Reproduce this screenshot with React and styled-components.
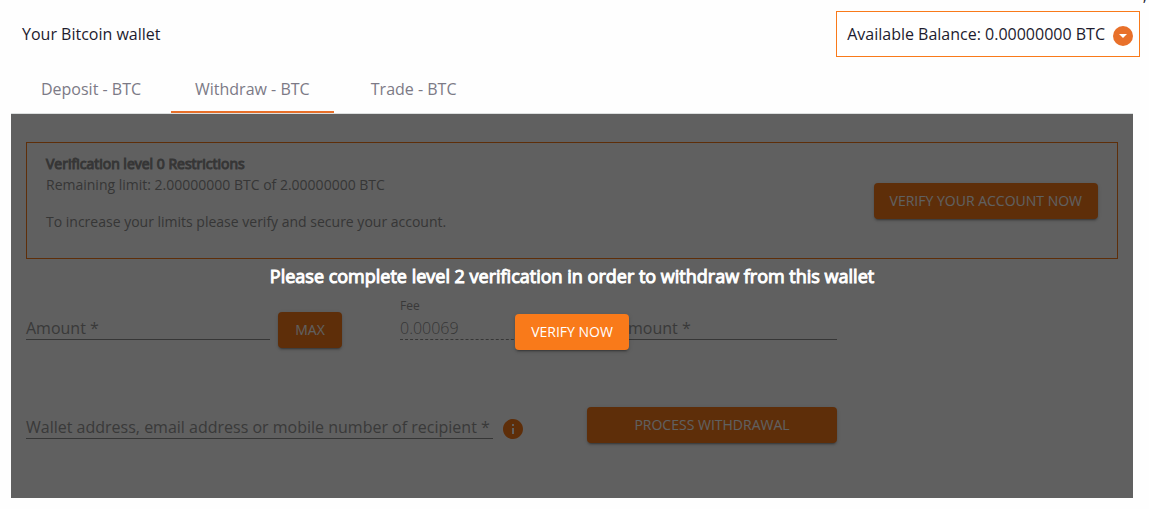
import React from "react";
import styled, { createGlobalStyle } from "styled-components";

const ORANGE = "#f97a1a";

const GlobalStyle = createGlobalStyle`
    * {
        box-sizing: border-box;
    }
    body {
        margin: 0;
        background: #fefefe;
        color: #1d1b2e;
        font-family: "Open Sans", "Noto Sans", sans-serif;
        font-size: 16px;
        line-height: 24px;
    }
    button, input {
        font-family: inherit;
    }
`;

const Page = styled.main`
    position: relative;
    padding: 11px 9px 11px 11px;
    overflow: hidden;
`;

// tail of the line that is scrolled out above the wallet
const ScrolledText = styled.span`
    position: absolute;
    top: -17px;
    right: 2px;
`;

const Header = styled.header`
    display: flex;
    align-items: center;
    justify-content: space-between;
    padding-left: 11px;
    margin-bottom: 8px;
`;

const Title = styled.h1`
    margin: 0;
    font-size: 16px;
    font-weight: 400;
`;

const Balance = styled.button`
    display: flex;
    align-items: center;
    gap: 8px;
    height: 46px;
    padding: 0 6px 0 10px;
    border: 1px solid ${ORANGE};
    background: #fff;
    color: inherit;
    font-size: 16px;

    svg {
        margin-top: 3px;
    }
`;

const Tabs = styled.div`
    display: flex;
    margin-right: 7px;
    border-bottom: 1px solid #dcdfdf;
`;

const Tab = styled.button`
    min-width: 160px;
    height: 48px;
    padding: 2px 24px 0;
    border: 0;
    border-bottom: 2px solid ${({ $active }) => ($active ? "#e8702a" : "transparent")};
    background: none;
    color: #7c7a86;
    font-size: 16px;
`;

const Panel = styled.section`
    position: relative;
    margin-right: 7px;
    padding: 28px 15px 55px;
    background: #fff;
`;

const Restrictions = styled.div`
    display: flex;
    align-items: center;
    justify-content: space-between;
    padding: 10px 19px;
    border: 1px solid ${ORANGE};
    color: #919191;
    font-size: 14px;
    line-height: 21px;

    p {
        margin: 0 0 16px;
    }
    strong {
        font-weight: 400;
        -webkit-text-stroke: 1px;
    }
`;

const Button = styled.button`
    min-width: 64px;
    height: 36px;
    padding: 0 16px;
    border: 0;
    border-radius: 4px;
    background: ${ORANGE};
    box-shadow: 0 3px 1px -2px rgba(0, 0, 0, 0.2), 0 2px 2px rgba(0, 0, 0, 0.14), 0 1px 5px rgba(0, 0, 0, 0.12);
    color: #fff;
    font-size: 14px;
    font-weight: 500;
    line-height: 36px;
    text-transform: uppercase;
`;

const Form = styled.form`
    display: grid;
    grid-template-columns: minmax(0, 1fr) 129px 250px;
    column-gap: 58px;
    row-gap: 47px;
    align-items: start;
    width: 75%;
    margin-top: 37px;
    padding-right: 8px;
`;

const AmountGroup = styled.div`
    display: flex;
    gap: 8px;

    ${Button} {
        margin-top: 16px;
    }
`;

const RecipientGroup = styled.div`
    grid-column: span 2;
    display: flex;
    align-items: flex-end;
    gap: 10px;
    padding-right: 6px;
`;

const SubmitButton = styled(Button)`
    margin-top: 12px;
`;

const FieldBox = styled.div`
    flex: 1;
    min-width: 0;
    display: grid;
    grid-template-rows: 16px 28px;
`;

const Label = styled.label`
    grid-area: ${({ $floating }) => ($floating ? "1 / 1" : "2 / 1")};
    padding-top: ${({ $floating }) => ($floating ? "2px" : "4px")};
    color: #999;
    font-size: ${({ $floating }) => ($floating ? "12px" : "16px")};
    font-weight: 400;
    line-height: ${({ $floating }) => ($floating ? "16px" : "24px")};
    white-space: nowrap;
    pointer-events: none;
`;

const Input = styled.input`
    grid-area: 2 / 1;
    width: 100%;
    padding: 4px 0 0;
    border: 0;
    border-bottom: 1px ${({ disabled }) => (disabled ? "dashed" : "solid")} #919191;
    background: none;
    color: #919191;
    font-size: 16px;
    font-weight: 300;
`;

const Overlay = styled.div`
    position: absolute;
    inset: 0;
    display: flex;
    flex-direction: column;
    align-items: center;
    justify-content: center;
    gap: 24px;
    background: rgba(0, 0, 0, 0.625);
    color: #fff;
`;

const Message = styled.p`
    margin: 0;
    font-size: 18px;
    line-height: 28px;
    -webkit-text-stroke: 1px;
`;

const Field = ({ id, label, value, disabled }) => (
    <FieldBox>
        <Label htmlFor={id} $floating={Boolean(value)}>
            {label}
        </Label>
        <Input id={id} defaultValue={value} disabled={disabled} />
    </FieldBox>
);

const CaretIcon = () => (
    <svg width="20" height="20" viewBox="0 0 20 20" aria-hidden="true">
        <circle cx="10" cy="10" r="10" fill="#e8702a" />
        <path d="M6 8h8l-4 4z" fill="#fff" />
    </svg>
);

const InfoIcon = () => (
    <svg width="20" height="20" viewBox="2 2 20 20" aria-hidden="true">
        <path
            fill={ORANGE}
            d="M12 2C6.48 2 2 6.48 2 12s4.48 10 10 10 10-4.48 10-10S17.52 2 12 2zm1 15h-2v-6h2v6zm0-8h-2V7h2v2z"
        />
    </svg>
);

const App = () => (
    <React.Fragment>
        <GlobalStyle />
        <Page>
            <ScrolledText>,</ScrolledText>
            <Header>
                <Title>Your Bitcoin wallet</Title>
                <Balance type="button">
                    Available Balance: 0.00000000 BTC
                    <CaretIcon />
                </Balance>
            </Header>
            <Tabs role="tablist">
                <Tab role="tab">Deposit - BTC</Tab>
                <Tab role="tab" aria-selected="true" $active>
                    Withdraw - BTC
                </Tab>
                <Tab role="tab">Trade - BTC</Tab>
            </Tabs>
            <Panel>
                <Restrictions>
                    <div>
                        <p>
                            <strong>Verification level 0 Restrictions</strong>
                            <br />
                            Remaining limit: 2.00000000 BTC of 2.00000000 BTC
                        </p>
                        <p>To increase your limits please verify and secure your account.</p>
                    </div>
                    <Button type="button">Verify your account now</Button>
                </Restrictions>
                <Form>
                    <AmountGroup>
                        <Field id="amount" label="Amount *" />
                        <Button type="button">Max</Button>
                    </AmountGroup>
                    <Field id="fee" label="Fee" value="0.00069" disabled />
                    <Field id="net-amount" label="Net Amount *" />
                    <RecipientGroup>
                        <Field
                            id="recipient"
                            label="Wallet address, email address or mobile number of recipient *"
                        />
                        <InfoIcon />
                    </RecipientGroup>
                    <SubmitButton type="button">Process withdrawal</SubmitButton>
                </Form>
                <Overlay>
                    <Message>Please complete level 2 verification in order to withdraw from this wallet</Message>
                    <Button type="button">Verify now</Button>
                </Overlay>
            </Panel>
        </Page>
    </React.Fragment>
);

export default App;
